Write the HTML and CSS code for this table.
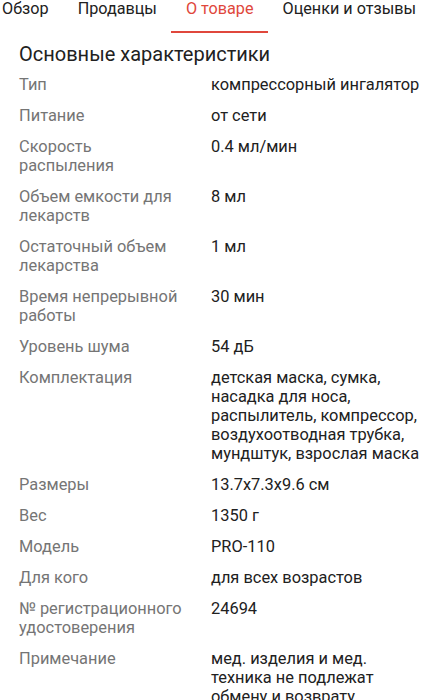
FILE: index.html
```html
<!DOCTYPE html>
<html lang="ru">
<head>
<meta charset="utf-8">
<link rel="stylesheet" href="styles.css">
</head>
<body>
<nav class="tabs">
  <div class="tab">Обзор</div>
  <div class="tab">Продавцы</div>
  <div class="tab active">О товаре</div>
  <div class="tab">Оценки и отзывы</div>
</nav>
<section class="specs">
  <h2 class="title">Основные характеристики</h2>
  <dl class="list">
    <div class="row"><dt>Тип</dt><dd>компрессорный ингалятор</dd></div>
    <div class="row"><dt>Питание</dt><dd>от сети</dd></div>
    <div class="row"><dt>Скорость распыления</dt><dd>0.4 мл/мин</dd></div>
    <div class="row"><dt>Объем емкости для лекарств</dt><dd>8 мл</dd></div>
    <div class="row"><dt>Остаточный объем лекарства</dt><dd>1 мл</dd></div>
    <div class="row"><dt>Время непрерывной работы</dt><dd>30 мин</dd></div>
    <div class="row"><dt>Уровень шума</dt><dd>54 дБ</dd></div>
    <div class="row"><dt>Комплектация</dt><dd>детская маска, сумка, насадка для носа, распылитель, компрессор, воздухоотводная трубка, мундштук, взрослая маска</dd></div>
    <div class="row"><dt>Размеры</dt><dd>13.7x7.3x9.6 см</dd></div>
    <div class="row"><dt>Вес</dt><dd>1350 г</dd></div>
    <div class="row"><dt>Модель</dt><dd>PRO-110</dd></div>
    <div class="row"><dt>Для кого</dt><dd>для всех возрастов</dd></div>
    <div class="row"><dt>№ регистрационного удостоверения</dt><dd>24694</dd></div>
    <div class="row"><dt>Примечание</dt><dd>мед. изделия и мед. техника не подлежат обмену и возврату</dd></div>
  </dl>
</section>
</body>
</html>
```
FILE: styles.css
```css
html, body {
  margin: 0;
  padding: 0;
  background: #ffffff;
}
body {
  font-family: Roboto, "Noto Sans", sans-serif;
  color: #212121;
  width: 440px;
  height: 700px;
  overflow: hidden;
}
.tabs {
  display: flex;
  height: 34px;
  padding-left: 2px;
}
.tab {
  font-size: 16.2px;
  line-height: 18px;
  padding: 0 14.5px;
  color: #212121;
  position: relative;
  white-space: nowrap;
}
.tab:first-child {
  padding-left: 0;
}
.tab.active {
  color: #e0473c;
}
.tab.active::after {
  content: "";
  position: absolute;
  left: 0;
  right: 0;
  top: 31px;
  height: 2px;
  background: #e0473c;
}
.specs {
  padding: 7px 10px 0 19px;
}
.title {
  margin: 0 0 8px 0;
  font-size: 20px;
  font-weight: 400;
  line-height: 26px;
  color: #212121;
}
.list {
  margin: 0;
  display: flex;
  flex-direction: column;
  gap: 12px;
}
.row {
  display: flex;
  gap: 26px;
  font-size: 16.4px;
  line-height: 19px;
}
.row dt {
  width: 166px;
  flex: none;
  color: #757575;
}
.row dd {
  margin: 0;
  flex: 1;
  color: #212121;
}
```
